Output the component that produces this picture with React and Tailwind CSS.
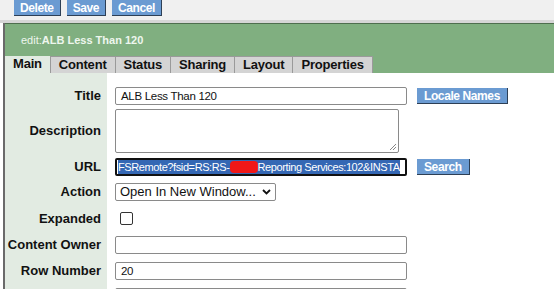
import React from 'react';

const font = { fontFamily: '"Liberation Sans", Arial, sans-serif' };

function TopButton({ children, className = '' }) {
  return (
    <button
      className={`h-[16px] bg-[#6b9bd2] text-white font-bold text-[12px] tracking-[-0.4px] leading-[16px] px-[6px] border-r border-b border-[#2d3f55] ${className}`}
    >
      {children}
    </button>
  );
}

function Row({ label, height, children }) {
  return (
    <div className="flex" style={{ height }}>
      <div className="w-[102px] shrink-0 bg-[#e2ebe2] flex items-center justify-end pr-[6px] text-[13px] font-bold text-[#111] whitespace-nowrap">
        {label}
      </div>
      <div className="flex-1 flex items-center pl-[8px]">{children}</div>
    </div>
  );
}

function TextBox({ value = '', width = 292 }) {
  return (
    <div
      className="h-[18px] border border-[#8a8a8a] rounded-[2px] bg-white text-[11.5px] tracking-[-0.3px] leading-[16px] pl-[5px] text-[#111]"
      style={{ width }}
    >
      {value}
    </div>
  );
}

export default function App() {
  const tabs = ['Main', 'Content', 'Status', 'Sharing', 'Layout', 'Properties'];

  return (
    <div className="w-[554px] h-[289px] overflow-hidden bg-white" style={font}>
      {/* Action buttons */}
      <div className="h-[20px] bg-[#f0f0f0] flex items-start gap-[6px] pl-[14px]">
        <TopButton>Delete</TopButton>
        <TopButton>Save</TopButton>
        <TopButton>Cancel</TopButton>
      </div>
      <div className="h-[3px] bg-[#d6d6d6]" />

      <div className="ml-[3px] border-l-2 border-[#6a6a6a]">
        {/* Header */}
        <div className="bg-[#80af80] border-t border-[#4e6e4e]">
          <div className="h-[32px] flex items-center pl-[16px] text-[11px] text-[#eef6ee]">
            <span>edit:</span>
            <span className="font-bold">ALB Less Than 120</span>
          </div>
          <div className="flex h-[17px]">
            {tabs.map((t, i) => (
              <div
                key={t}
                className={`h-[17px] px-[8px] text-[13px] font-bold tracking-[-0.2px] leading-[16px] text-[#111] border-r border-t border-[#9a9a9a] ${
                  i === 0 ? 'bg-[#e2ebe2] border-t-0' : 'bg-[#d4d4d4]'
                }`}
              >
                {t}
              </div>
            ))}
          </div>
        </div>

        {/* Form */}
        <div className="flex h-[12px]">
          <div className="w-[102px] bg-[#e2ebe2]" />
        </div>
        <Row label="Title" height={22}>
          <TextBox value="ALB Less Than 120" />
          <TopButton className="ml-[10px] px-[7px]">Locale Names</TopButton>
        </Row>
        <Row label="Description" height={48}>
          <div className="relative w-[284px] h-[44px] border border-[#8a8a8a] rounded-[2px] bg-white">
            <svg className="absolute right-[1px] bottom-[1px]" width="8" height="8" viewBox="0 0 8 8">
              <path d="M7 1L1 7M7 4L4 7" stroke="#888" strokeWidth="1" />
            </svg>
          </div>
        </Row>
        <Row label="URL" height={24}>
          <div className="w-[292px] h-[18px] border-2 border-[#111] rounded-[2px] bg-white overflow-hidden flex items-center pl-[1px]">
            <span className="whitespace-nowrap bg-[#3467b4] text-white text-[11px] tracking-[-0.4px] leading-[14px] flex items-center">
              FSRemote?fsid=RS:RS-
              <span className="inline-block w-[28px] h-[12px] bg-[#f01818] rounded-[4px]" />
              Reporting Services:102&amp;INSTA
            </span>
          </div>
          <TopButton className="ml-[10px] px-[7px]">Search</TopButton>
        </Row>
        <Row label="Action" height={26}>
          <div className="w-[161px] h-[18px] border border-[#8a8a8a] rounded-[2px] bg-white flex items-center justify-between pl-[4px] pr-[4px] text-[13px] text-[#111]">
            <span>Open In New Window...</span>
            <svg width="9" height="6" viewBox="0 0 9 6">
              <path d="M1 1l3.5 3.5L8 1" stroke="#111" strokeWidth="1.8" fill="none" />
            </svg>
          </div>
        </Row>
        <Row label="Expanded" height={27}>
          <div className="ml-[5px] w-[13px] h-[13px] border border-[#333] rounded-[2px] bg-white" />
        </Row>
        <Row label="Content Owner" height={26}>
          <TextBox />
        </Row>
        <Row label="Row Number" height={26}>
          <TextBox value="20" />
        </Row>
        <Row label="" height={26}>
          <TextBox />
        </Row>
      </div>
    </div>
  );
}
